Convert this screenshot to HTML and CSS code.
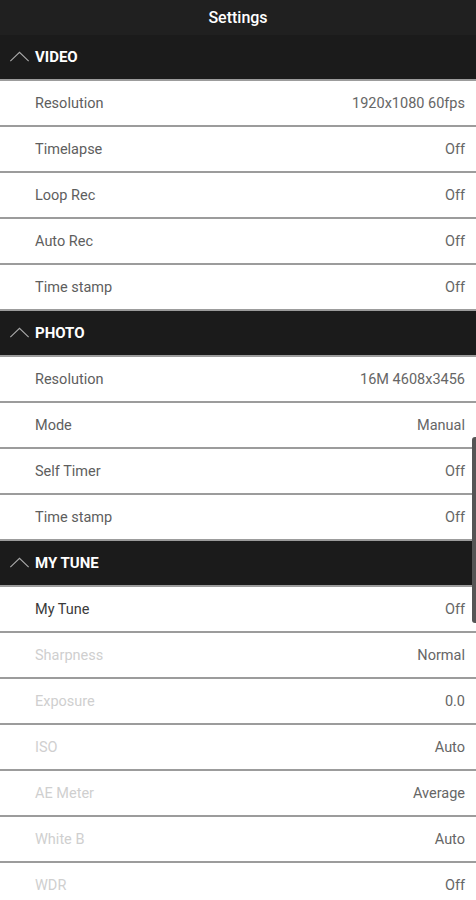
FILE: index.html
```html
<!DOCTYPE html>
<html>
<head>
<meta charset="utf-8">
<link rel="stylesheet" href="styles.css">
</head>
<body>
<div class="app">
  <header class="titlebar">Settings</header>
  <div class="list">
    <div class="section"><svg class="chev" viewBox="0 0 22 12"><path d="M1 11 L11 1.5 L21 11" fill="none" stroke="#aaa" stroke-width="1.2"/></svg><span>VIDEO</span></div>
    <div class="row"><span class="label">Resolution</span><span class="value">1920x1080 60fps</span></div>
    <div class="row"><span class="label">Timelapse</span><span class="value">Off</span></div>
    <div class="row"><span class="label">Loop Rec</span><span class="value">Off</span></div>
    <div class="row"><span class="label">Auto Rec</span><span class="value">Off</span></div>
    <div class="row"><span class="label">Time stamp</span><span class="value">Off</span></div>
    <div class="section"><svg class="chev" viewBox="0 0 22 12"><path d="M1 11 L11 1.5 L21 11" fill="none" stroke="#aaa" stroke-width="1.2"/></svg><span>PHOTO</span></div>
    <div class="row"><span class="label">Resolution</span><span class="value">16M 4608x3456</span></div>
    <div class="row"><span class="label">Mode</span><span class="value">Manual</span></div>
    <div class="row"><span class="label">Self Timer</span><span class="value">Off</span></div>
    <div class="row"><span class="label">Time stamp</span><span class="value">Off</span></div>
    <div class="section"><svg class="chev" viewBox="0 0 22 12"><path d="M1 11 L11 1.5 L21 11" fill="none" stroke="#aaa" stroke-width="1.2"/></svg><span>MY TUNE</span></div>
    <div class="row"><span class="label dark">My Tune</span><span class="value">Off</span></div>
    <div class="row"><span class="label disabled">Sharpness</span><span class="value">Normal</span></div>
    <div class="row"><span class="label disabled">Exposure</span><span class="value">0.0</span></div>
    <div class="row"><span class="label disabled">ISO</span><span class="value">Auto</span></div>
    <div class="row"><span class="label disabled">AE Meter</span><span class="value">Average</span></div>
    <div class="row"><span class="label disabled">White B</span><span class="value">Auto</span></div>
    <div class="row"><span class="label disabled">WDR</span><span class="value">Off</span></div>
  </div>
  <div class="scrollbar"></div>
</div>
</body>
</html>
```

FILE: styles.css
```css
html, body {
  margin: 0;
  padding: 0;
  background: #ffffff;
}
body {
  font-family: Roboto, "Liberation Sans", sans-serif;
  overflow: hidden;
}
.app {
  width: 476px;
  height: 900px;
  overflow: hidden;
  position: relative;
}
.titlebar {
  height: 35px;
  background: #202020;
  color: #ffffff;
  font-size: 16px;
  font-weight: 500;
  display: flex;
  align-items: center;
  justify-content: center;
}
.list {
  display: flex;
  flex-direction: column;
}
.section {
  height: 44px;
  background: #1b1b1b;
  border-bottom: 2px solid #9c9c9c;
  display: flex;
  align-items: center;
  padding-left: 9px;
  color: #ffffff;
  font-weight: 700;
  font-size: 15px;
}
.chev {
  width: 21px;
  height: 11px;
  margin-right: 5px;
  margin-bottom: 2px;
}
.row {
  height: 44px;
  border-bottom: 2px solid #9c9c9c;
  display: flex;
  align-items: center;
  justify-content: space-between;
  padding: 0 11px 0 35px;
  font-size: 14.5px;
}
.label {
  color: #5e5e5e;
}
.label.dark {
  color: #3a3a3a;
}
.label.disabled {
  color: #cfcfcf;
}
.value {
  color: #666666;
  font-size: 14.5px;
}
.scrollbar {
  position: absolute;
  right: 0;
  top: 437px;
  width: 4px;
  height: 186px;
  background: #555555;
  border-radius: 3px 0 0 3px;
}
```
